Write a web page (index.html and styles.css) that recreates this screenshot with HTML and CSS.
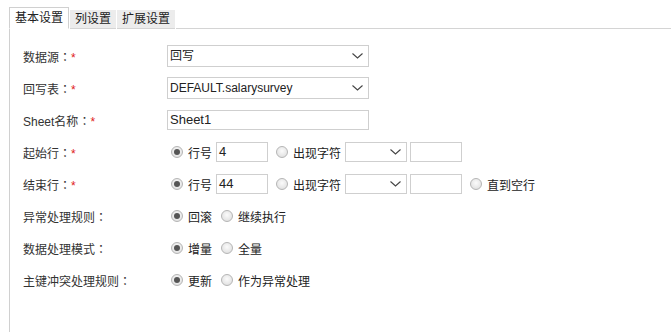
FILE: index.html
```html
<!DOCTYPE html>
<html>
<head>
<meta charset="utf-8">
<link rel="stylesheet" href="styles.css">
</head>
<body>
<div class="tabs">
  <div class="tab active">基本设置</div>
  <div class="tab">列设置</div>
  <div class="tab">扩展设置</div>
  <div class="tab-fill"></div>
</div>
<div class="panel">
  <div class="row">
    <div class="lbl">数据源<span class="colon">：</span><span class="req">*</span></div>
    <div class="ctl">
      <div class="sel big w-wide"><span class="val">回写</span><svg class="chev" width="11" height="6" viewBox="0 0 11 6"><path d="M0.5 0.5 L5.5 5 L10.5 0.5" fill="none" stroke="#444" stroke-width="1.1"/></svg></div>
    </div>
  </div>
  <div class="row">
    <div class="lbl">回写表<span class="colon">：</span><span class="req">*</span></div>
    <div class="ctl">
      <div class="sel big w-wide"><span class="val">DEFAULT.salarysurvey</span><svg class="chev" width="11" height="6" viewBox="0 0 11 6"><path d="M0.5 0.5 L5.5 5 L10.5 0.5" fill="none" stroke="#444" stroke-width="1.1"/></svg></div>
    </div>
  </div>
  <div class="row">
    <div class="lbl">Sheet名称<span class="colon">：</span><span class="req">*</span></div>
    <div class="ctl">
      <div class="inp w-wide">Sheet1</div>
    </div>
  </div>
  <div class="row">
    <div class="lbl">起始行<span class="colon">：</span><span class="req">*</span></div>
    <div class="ctl">
      <span class="radio on"></span><span class="txt">行号</span>
      <div class="inp w-num">4</div>
      <span class="radio"></span><span class="txt">出现字符</span>
      <div class="sel w-sel"><svg class="chev" width="11" height="6" viewBox="0 0 11 6"><path d="M0.5 0.5 L5.5 5 L10.5 0.5" fill="none" stroke="#444" stroke-width="1.1"/></svg></div>
      <div class="inp w-num"></div>
    </div>
  </div>
  <div class="row">
    <div class="lbl">结束行<span class="colon">：</span><span class="req">*</span></div>
    <div class="ctl">
      <span class="radio on"></span><span class="txt">行号</span>
      <div class="inp w-num">44</div>
      <span class="radio"></span><span class="txt">出现字符</span>
      <div class="sel w-sel"><svg class="chev" width="11" height="6" viewBox="0 0 11 6"><path d="M0.5 0.5 L5.5 5 L10.5 0.5" fill="none" stroke="#444" stroke-width="1.1"/></svg></div>
      <div class="inp w-num"></div>
      <span class="radio"></span><span class="txt">直到空行</span>
    </div>
  </div>
  <div class="row">
    <div class="lbl">异常处理规则<span class="colon">：</span></div>
    <div class="ctl">
      <span class="radio on"></span><span class="txt">回滚</span>
      <span class="radio"></span><span class="txt">继续执行</span>
    </div>
  </div>
  <div class="row">
    <div class="lbl">数据处理模式<span class="colon">：</span></div>
    <div class="ctl">
      <span class="radio on"></span><span class="txt">增量</span>
      <span class="radio"></span><span class="txt">全量</span>
    </div>
  </div>
  <div class="row">
    <div class="lbl">主键冲突处理规则<span class="colon">：</span></div>
    <div class="ctl">
      <span class="radio on"></span><span class="txt">更新</span>
      <span class="radio"></span><span class="txt">作为异常处理</span>
    </div>
  </div>
</div>
</body>
</html>
```
FILE: styles.css
```css
* { box-sizing: border-box; }
html, body { margin: 0; padding: 0; background: #fff; }
body {
  width: 671px;
  height: 332px;
  overflow: hidden;
  font-family: "Liberation Sans", "Noto Sans CJK SC", sans-serif;
  font-size: 12px;
  color: #333;
}
.tabs {
  display: flex;
  align-items: flex-end;
  padding: 7px 0 0 9px;
  height: 29px;
}
.tab {
  height: 19px;
  line-height: 19px;
  padding: 0 5px;
  background: #ececec;
  color: #222;
  margin-left: 1px;
  border-bottom: 1px solid #d4d4d4;
}
.tab.active {
  height: 22px;
  line-height: 21px;
  background: #fff;
  border: 1px solid #d0d0d0;
  border-bottom: 1px solid #fff;
  margin-left: 0;
  padding: 0 5px;
}
.tab-fill {
  flex: 1;
  border-bottom: 1px solid #d4d4d4;
  margin-left: 1px;
}
.panel {
  margin-left: 9px;
  border-left: 1px solid #d0d0d0;
  height: 303px;
  padding: 11px 0 0 13px;
}
.row {
  display: flex;
  align-items: center;
  height: 32px;
}
.lbl {
  width: 144px;
  flex: none;
  color: #333;
}
.colon { font-family: "Noto Sans CJK TC", sans-serif; }
.req { color: #e02020; }
.ctl {
  display: flex;
  align-items: center;
}
.sel, .inp {
  position: relative;
  border: 1px solid #cfcfcf;
  background: #fff;
  height: 20px;
  line-height: 18px;
  font-size: 13px;
  color: #222;
  padding: 0 2px;
  flex: none;
}
.sel { font-size: 12px; }
.sel.big { height: 22px; line-height: 20px; }
.w-wide { width: 202px; }
.w-num { width: 52px; }
.w-sel { width: 62px; margin-right: 3px; }
.chev {
  position: absolute;
  right: 5px;
  top: 50%;
  margin-top: -3px;
}
.radio {
  width: 12px;
  height: 12px;
  border-radius: 50%;
  border: 1px solid #b5b5b5;
  background: radial-gradient(circle at 50% 40%, #fbfbfb 0%, #e4e4e4 70%, #d6d6d6 100%);
  flex: none;
  margin: 0 5px 0 4px;
  position: relative;
}
.ctl > .radio:first-child { margin-left: 4px; }
.radio.on::after {
  content: "";
  position: absolute;
  left: 2px;
  top: 2px;
  width: 6px;
  height: 6px;
  border-radius: 50%;
  background: #555;
}
.txt {
  margin-right: 4px;
  color: #222;
}
.inp + .radio { margin-left: 8px; }
.txt + .radio { margin-left: 5px; }
```
